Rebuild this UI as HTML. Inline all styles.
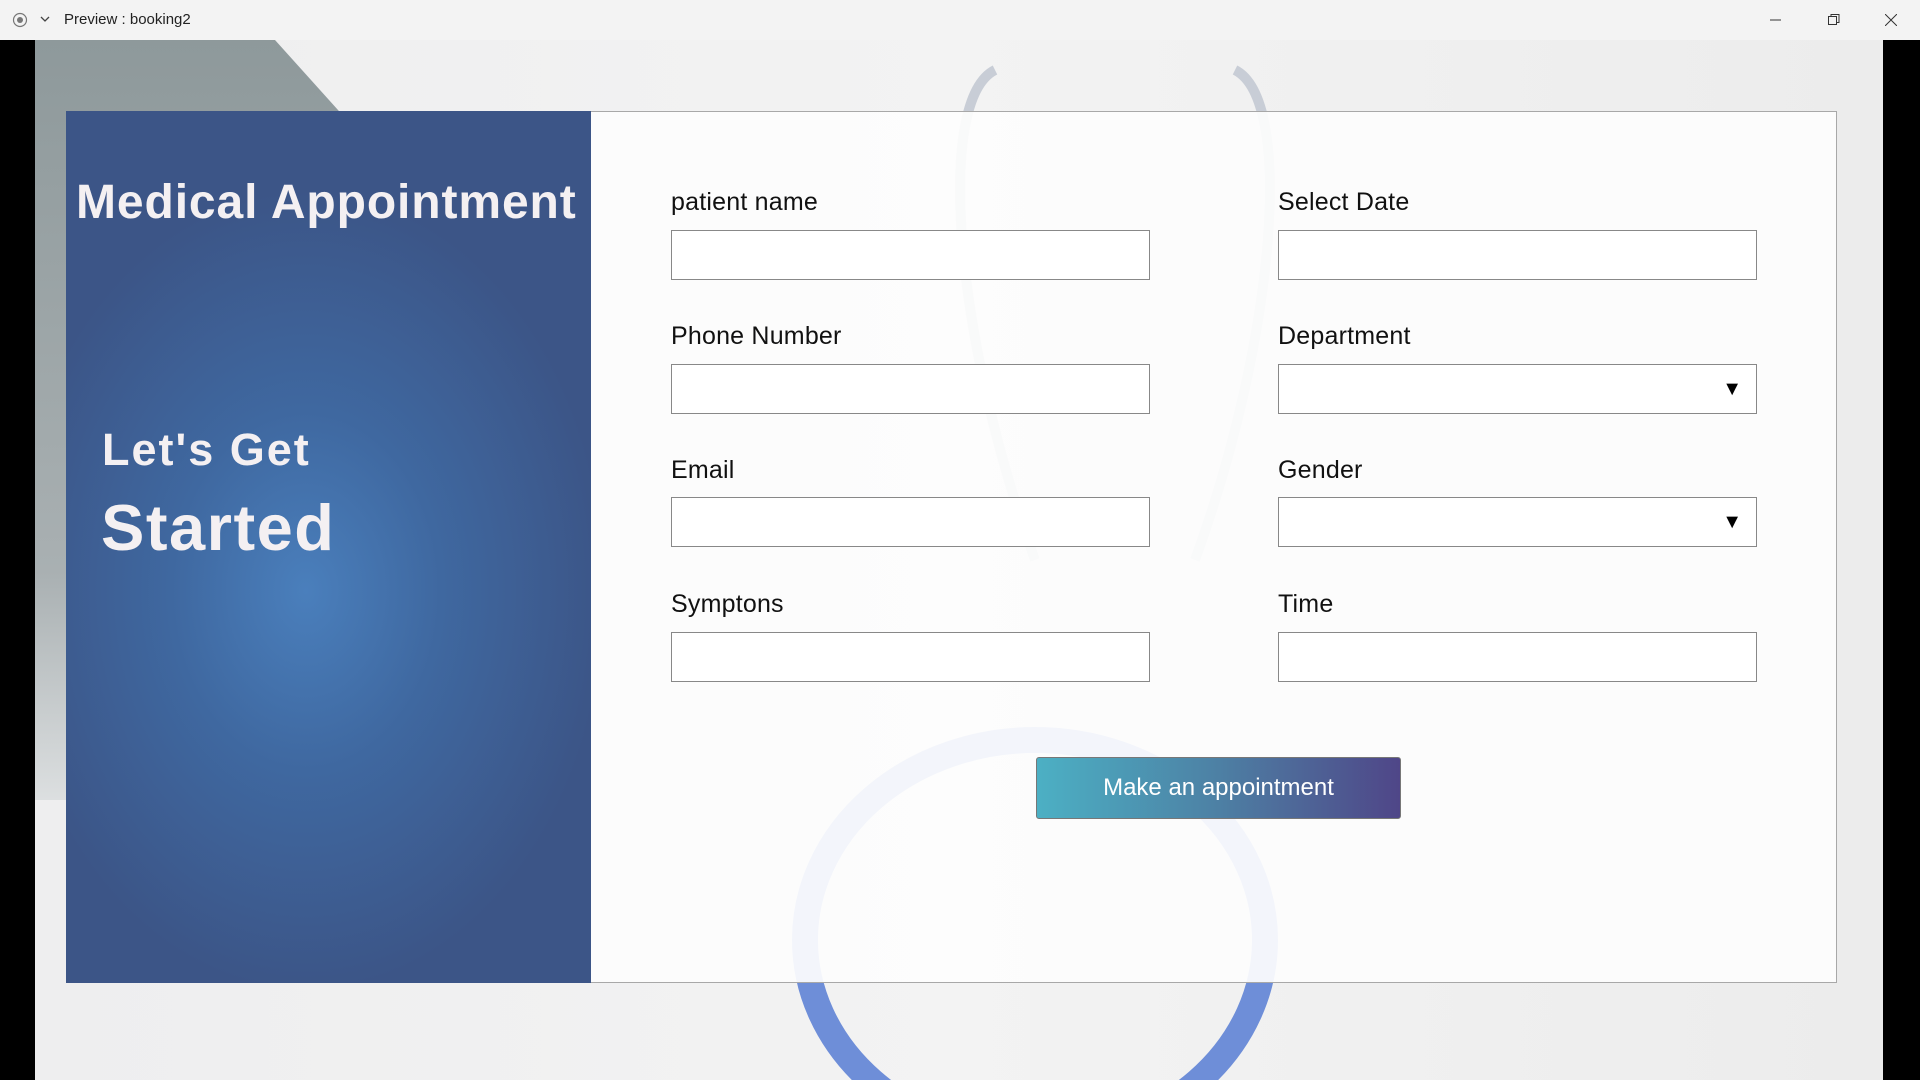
<!DOCTYPE html>
<html><head><style>
*{margin:0;padding:0;box-sizing:border-box}
html,body{overflow:hidden}
body{width:1920px;height:1080px;background:#000;font-family:"Liberation Sans",sans-serif;position:relative}
#tb{position:absolute;left:0;top:0;width:1920px;height:40px;background:#f3f3f3;font-size:15px;color:#222}
#bg{position:absolute;left:35px;top:40px;width:1848px;height:1040px;background:linear-gradient(90deg,#eeeeef 0%,#f3f3f3 50%,#ececec 100%);overflow:hidden}
#card{position:absolute;left:66px;top:111px;width:1771px;height:872px;border:1px solid #a8a8a8;background:rgba(253,253,253,0.93)}
#left{position:absolute;left:66px;top:111px;width:525px;height:872px;background:radial-gradient(ellipse 300px 400px at 240px 480px,#4a7fbc 0%,#3f68a0 45%,rgba(60,85,135,1) 100%);overflow:hidden}
.lbl{position:absolute;font-size:25px;color:#111;letter-spacing:0.2px}
.in{position:absolute;width:479px;height:50px;border:1px solid #888;background:#fff}
.arr{position:absolute;right:14px;top:13px;font-size:20px;color:#000}
.t{position:absolute;font-weight:bold;color:#f4f0f2;white-space:nowrap}
</style></head><body>
<div id="tb">
<svg style="position:absolute;left:12px;top:12px" width="16" height="16"><circle cx="8" cy="8" r="6.5" fill="none" stroke="#777" stroke-width="1.2"/><circle cx="8" cy="8" r="3" fill="#777"/></svg>
<svg style="position:absolute;left:40px;top:16px" width="10" height="8"><path d="M1 1L5 5L9 1" fill="none" stroke="#444" stroke-width="1.3"/></svg>
<span style="position:absolute;left:64px;top:11px">Preview : booking2</span>
<svg style="position:absolute;left:1770px;top:14px" width="12" height="12"><path d="M0 6H11" stroke="#333"/></svg>
<svg style="position:absolute;left:1828px;top:14px" width="12" height="12"><rect x="0.5" y="2.5" width="8" height="8" fill="none" stroke="#333"/><path d="M3 2.5V0.5H11V8.5H9" fill="none" stroke="#333"/></svg>
<svg style="position:absolute;left:1885px;top:14px" width="12" height="12"><path d="M0 0L12 12M12 0L0 12" stroke="#333"/></svg>
</div>
<div id="bg">
<svg style="position:absolute;left:0;top:0" width="1848" height="1040">
<defs><linearGradient id="g" x1="0" y1="0" x2="0" y2="1"><stop offset="0" stop-color="#8e999b"/><stop offset="0.7" stop-color="#a9b0b2"/><stop offset="1" stop-color="#dcdfe0"/></linearGradient></defs>
<path d="M0 0H240L330 100L60 760H0Z" fill="url(#g)"/>
<ellipse cx="1000" cy="900" rx="230" ry="200" fill="none" stroke="#6e8ed8" stroke-width="26"/>
<path d="M960 30 C900 60 920 300 1000 520" fill="none" stroke="#c8cdd6" stroke-width="10"/>
<path d="M1200 30 C1260 60 1240 300 1160 520" fill="none" stroke="#c8cdd6" stroke-width="10"/>
</svg>
</div>
<div id="card"></div>
<div id="left">
<div class="t" style="left:10px;top:64px;font-size:48px;letter-spacing:0.9px">Medical Appointment</div>
<div class="t" style="left:36px;top:313px;font-size:45px;letter-spacing:2px">Let's Get</div>
<div class="t" style="left:35px;top:379px;font-size:65px;letter-spacing:1.5px">Started</div>
</div>
<div class="lbl" style="left:671px;top:188px">patient name</div>
<div class="in" style="left:671px;top:230px"></div>
<div class="lbl" style="left:671px;top:322px">Phone Number</div>
<div class="in" style="left:671px;top:364px"></div>
<div class="lbl" style="left:671px;top:456px">Email</div>
<div class="in" style="left:671px;top:497px"></div>
<div class="lbl" style="left:671px;top:590px">Symptons</div>
<div class="in" style="left:671px;top:632px"></div>
<div class="lbl" style="left:1278px;top:188px">Select Date</div>
<div class="in" style="left:1278px;top:230px"></div>
<div class="lbl" style="left:1278px;top:322px">Department</div>
<div class="in" style="left:1278px;top:364px"><span class="arr">▼</span></div>
<div class="lbl" style="left:1278px;top:456px">Gender</div>
<div class="in" style="left:1278px;top:497px"><span class="arr">▼</span></div>
<div class="lbl" style="left:1278px;top:590px">Time</div>
<div class="in" style="left:1278px;top:632px"></div>
<div style="position:absolute;left:1036px;top:757px;width:365px;height:62px;border-radius:3px;border:1px solid #777;background:linear-gradient(90deg,#4cb0c4,#4d80a4 50%,#4f4688);color:#fff;font-size:24px;text-align:center;line-height:60px">Make an appointment</div>
</body></html>
